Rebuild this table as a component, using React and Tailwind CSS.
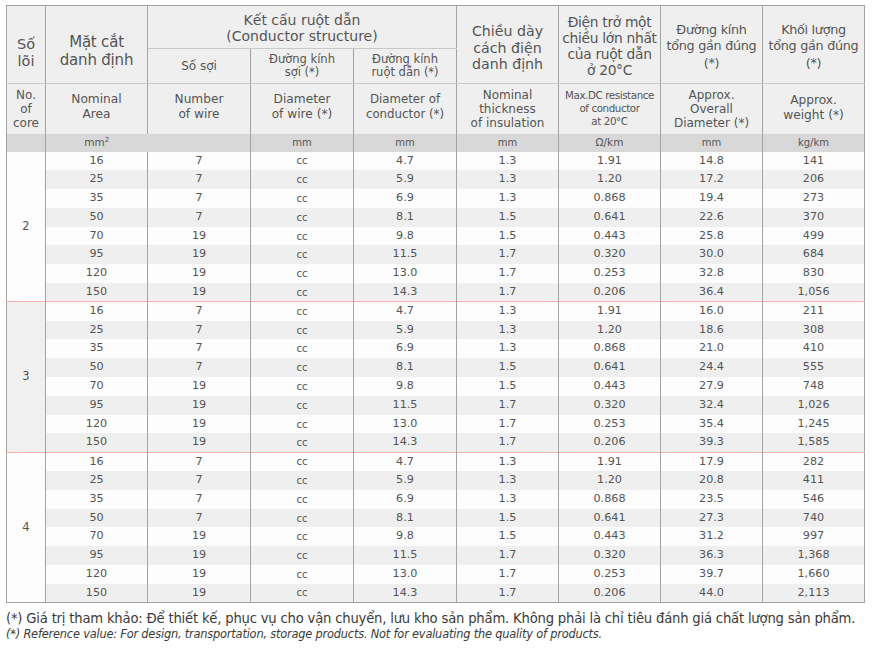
import React from "react";

const groups = [
  {
    core: "2",
    rows: [
      ["16", "7", "cc", "4.7", "1.3", "1.91", "14.8", "141"],
      ["25", "7", "cc", "5.9", "1.3", "1.20", "17.2", "206"],
      ["35", "7", "cc", "6.9", "1.3", "0.868", "19.4", "273"],
      ["50", "7", "cc", "8.1", "1.5", "0.641", "22.6", "370"],
      ["70", "19", "cc", "9.8", "1.5", "0.443", "25.8", "499"],
      ["95", "19", "cc", "11.5", "1.7", "0.320", "30.0", "684"],
      ["120", "19", "cc", "13.0", "1.7", "0.253", "32.8", "830"],
      ["150", "19", "cc", "14.3", "1.7", "0.206", "36.4", "1,056"],
    ],
  },
  {
    core: "3",
    rows: [
      ["16", "7", "cc", "4.7", "1.3", "1.91", "16.0", "211"],
      ["25", "7", "cc", "5.9", "1.3", "1.20", "18.6", "308"],
      ["35", "7", "cc", "6.9", "1.3", "0.868", "21.0", "410"],
      ["50", "7", "cc", "8.1", "1.5", "0.641", "24.4", "555"],
      ["70", "19", "cc", "9.8", "1.5", "0.443", "27.9", "748"],
      ["95", "19", "cc", "11.5", "1.7", "0.320", "32.4", "1,026"],
      ["120", "19", "cc", "13.0", "1.7", "0.253", "35.4", "1,245"],
      ["150", "19", "cc", "14.3", "1.7", "0.206", "39.3", "1,585"],
    ],
  },
  {
    core: "4",
    rows: [
      ["16", "7", "cc", "4.7", "1.3", "1.91", "17.9", "282"],
      ["25", "7", "cc", "5.9", "1.3", "1.20", "20.8", "411"],
      ["35", "7", "cc", "6.9", "1.3", "0.868", "23.5", "546"],
      ["50", "7", "cc", "8.1", "1.5", "0.641", "27.3", "740"],
      ["70", "19", "cc", "9.8", "1.5", "0.443", "31.2", "997"],
      ["95", "19", "cc", "11.5", "1.7", "0.320", "36.3", "1,368"],
      ["120", "19", "cc", "13.0", "1.7", "0.253", "39.7", "1,660"],
      ["150", "19", "cc", "14.3", "1.7", "0.206", "44.0", "2,113"],
    ],
  },
];

const colWidths = [39, 102, 103, 103, 103, 102, 102, 102, 102];

const App = () => {
  return (
    <div
      className="w-[875px] h-[660px] bg-white text-[#555555] pt-[5px] pl-[6px]"
      style={{ fontFamily: '"DejaVu Sans", sans-serif' }}
    >
      <table className="border-collapse table-fixed w-[858px] border border-[#a3a3a3]">
        <colgroup>
          {colWidths.map((w, i) => (
            <col key={i} style={{ width: w }} />
          ))}
        </colgroup>
        <thead className="bg-[#efefef] text-center">
          {/* Vietnamese headings */}
          <tr className="h-[43px]">
            <th rowSpan={2} className="font-normal text-[14.5px] leading-[17px] border-r border-b border-r-[#a3a3a3] border-b-[#c9c9c9] pt-[16px]">
              Số
              <br />
              lõi
            </th>
            <th rowSpan={2} className="font-normal text-[15px] leading-[18px] tracking-[-0.2px] border-r border-b border-r-[#a3a3a3] border-b-[#c9c9c9] pt-[13px]">
              Mặt cắt
              <br />
              danh định
            </th>
            <th colSpan={3} className="font-normal text-[14px] leading-[16px] border-r border-b border-r-[#a3a3a3] border-b-[#c9c9c9] pt-[2px]">
              Kết cấu ruột dẫn
              <br />
              (Conductor structure)
            </th>
            <th rowSpan={2} className="font-normal text-[14.2px] leading-[16.5px] border-r border-b border-r-[#a3a3a3] border-b-[#c9c9c9] pt-[7px]">
              Chiều dày
              <br />
              cách điện
              <br />
              danh định
            </th>
            <th rowSpan={2} className="font-normal text-[13.8px] leading-[16px] tracking-[-0.3px] border-r border-b border-r-[#a3a3a3] border-b-[#c9c9c9] pt-[2px]">
              Điện trở một
              <br />
              chiều lớn nhất
              <br />
              của ruột dẫn
              <br />ở 20°C
            </th>
            <th rowSpan={2} className="font-normal text-[12.8px] leading-[16.5px] tracking-[-0.3px] border-r border-b border-r-[#a3a3a3] border-b-[#c9c9c9] pt-[4px]">
              Đường kính
              <br />
              tổng gần đúng
              <br />
              (*)
            </th>
            <th rowSpan={2} className="font-normal text-[12.8px] leading-[16.5px] tracking-[-0.3px] border-b border-b-[#c9c9c9] pt-[4px]">
              Khối lượng
              <br />
              tổng gần đúng
              <br />
              (*)
            </th>
          </tr>
          <tr className="h-[35px]">
            <th className="font-normal text-[12px] border-r border-b border-r-[#a3a3a3] border-b-[#c9c9c9]">Số sợi</th>
            <th className="font-normal text-[11.5px] leading-[13px] border-r border-b border-r-[#a3a3a3] border-b-[#c9c9c9]">
              Đường kính
              <br />
              sợi (*)
            </th>
            <th className="font-normal text-[11.5px] leading-[13px] border-r border-b border-r-[#a3a3a3] border-b-[#c9c9c9]">
              Đường kính
              <br />
              ruột dẫn (*)
            </th>
          </tr>
          {/* English headings */}
          <tr className="h-[50px]">
            <th className="font-normal text-[12px] leading-[14px] border-r border-r-[#a3a3a3]">
              No.
              <br />
              of
              <br />
              core
            </th>
            <th className="font-normal text-[12.2px] leading-[15px] border-r border-r-[#a3a3a3] pb-[4px]">
              Nominal
              <br />
              Area
            </th>
            <th className="font-normal text-[12.2px] leading-[15px] border-r border-r-[#a3a3a3] pb-[4px]">
              Number
              <br />
              of wire
            </th>
            <th className="font-normal text-[12.2px] leading-[15px] border-r border-r-[#a3a3a3] pb-[4px]">
              Diameter
              <br />
              of wire (*)
            </th>
            <th className="font-normal text-[11.8px] leading-[15px] border-r border-r-[#a3a3a3] pb-[4px]">
              Diameter of
              <br />
              conductor (*)
            </th>
            <th className="font-normal text-[12px] leading-[14px] border-r border-r-[#a3a3a3]">
              Nominal
              <br />
              thickness
              <br />
              of insulation
            </th>
            <th className="font-normal text-[10.3px] leading-[13px] tracking-[-0.4px] border-r border-r-[#a3a3a3]">
              Max.DC resistance
              <br />
              of conductor
              <br />
              at 20°C
            </th>
            <th className="font-normal text-[12px] leading-[14px] border-r border-r-[#a3a3a3]">
              Approx.
              <br />
              Overall
              <br />
              Diameter (*)
            </th>
            <th className="font-normal text-[12.2px] leading-[15px] pb-[2px]">
              Approx.
              <br />
              weight (*)
            </th>
          </tr>
          {/* Units */}
          <tr className="h-[18px] bg-[#d8d8d8]">
            <th className="font-normal border-r border-r-[#a3a3a3]"></th>
            <th className="font-normal text-[10.5px]">
              mm<sup className="text-[7px]">2</sup>
            </th>
            <th className="font-normal border-r border-r-[#a3a3a3]"></th>
            <th className="font-normal text-[10px] border-r border-r-[#a3a3a3]">mm</th>
            <th className="font-normal text-[10px] border-r border-r-[#a3a3a3]">mm</th>
            <th className="font-normal text-[10px] border-r border-r-[#a3a3a3]">mm</th>
            <th className="font-normal text-[10.5px] border-r border-r-[#a3a3a3]">Ω/km</th>
            <th className="font-normal text-[10px] border-r border-r-[#a3a3a3]">mm</th>
            <th className="font-normal text-[10px]">kg/km</th>
          </tr>
        </thead>
        <tbody className="text-center text-[11.2px]">
          {groups.map((g, gi) =>
            g.rows.map((r, ri) => (
              <tr
                key={`${gi}-${ri}`}
                className={`h-[18.8px] ${ri % 2 === 1 ? "bg-[#efefef]" : "bg-[#fdfdfd]"} ${
                  ri === 0 && gi > 0 ? "border-t border-t-[#f3b1b1]" : ""
                }`}
              >
                {ri === 0 && (
                  <td
                    rowSpan={8}
                    className={`border-r border-r-[#a3a3a3] text-[11.5px] ${
                      gi === 1 ? "bg-[#f0f0f0]" : "bg-[#fdfdfd]"
                    } ${gi > 0 ? "border-t border-t-[#f3b1b1]" : ""}`}
                  >
                    {g.core}
                  </td>
                )}
                {r.map((v, ci) => (
                  <td
                    key={ci}
                    className={`p-0 ${ci < 7 ? "border-r border-r-[#a3a3a3]" : ""} ${
                      ci === 2 ? "text-[10px]" : ""
                    }`}
                  >
                    {v}
                  </td>
                ))}
              </tr>
            ))
          )}
        </tbody>
      </table>
      <div className="mt-[7px] text-[#3a3a3a]">
        <p className="text-[13.2px] leading-[17px] tracking-[-0.2px]">
          (*) Giá trị tham khảo: Để thiết kế, phục vụ cho vận chuyển, lưu kho sản phẩm. Không phải là chỉ tiêu đánh giá chất lượng sản phẩm.
        </p>
        <p className="text-[11.4px] leading-[14px] italic tracking-[-0.2px]">
          (*) Reference value: For design, transportation, storage products. Not for evaluating the quality of products.
        </p>
      </div>
    </div>
  );
};

export default App;
